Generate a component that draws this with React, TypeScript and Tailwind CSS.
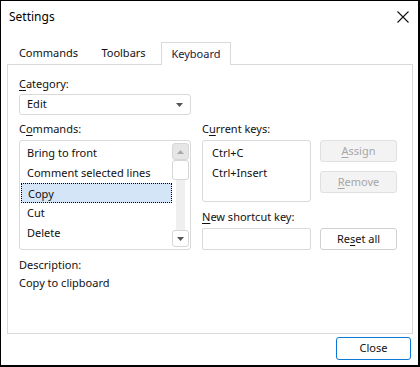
import React from "react";

const font = { fontFamily: '"Noto Sans", "Segoe UI", sans-serif' };

function U({ children }: { children: React.ReactNode }) {
  return <span className="underline underline-offset-2">{children}</span>;
}

export default function App() {
  const items = ["Bring to front", "Comment selected lines", "Copy", "Cut", "Delete", "Duplicate"];
  return (
    <div
      className="w-[420px] h-[367px] bg-white border-l border-t border-r-2 border-b-2 border-black flex flex-col text-[11px] text-[#111] overflow-hidden"
      style={font}
    >
      {/* title bar */}
      <div className="h-[31px] flex items-center justify-between pl-[8px] pr-[7px]">
        <span className="text-[12px] text-black">Settings</span>
        <svg width="14" height="14" viewBox="0 0 14 14" className="mr-[1px]">
          <path d="M1.5 1.5 L12.5 12.5 M12.5 1.5 L1.5 12.5" stroke="#111" strokeWidth="1.1" />
        </svg>
      </div>
      {/* tabs */}
      <div className="h-[10px]" />
      <div className="flex items-end h-[22px] pl-[10px] relative z-10">
        <div className="w-[75px] h-[22px] flex items-center justify-center text-[#111]">Commands</div>
        <div className="w-[75px] h-[22px] flex items-center justify-center text-[#111]">Toolbars</div>
        <div className="w-[70px] h-[23px] mb-[-1px] flex items-center justify-center bg-white border border-b-0 border-[#d9d9d9] text-[#1a1a3a]">
          Keyboard
        </div>
      </div>
      {/* panel */}
      <div className="ml-[6px] w-[406px] h-[270px] border border-[#d9d9d9] px-[11px] pt-[10px]">
        <div className="flex gap-[11px]">
          {/* left column */}
          <div className="w-[172px] flex flex-col">
            <div className="h-[17px] leading-[17px]"><U>C</U>ategory:</div>
            <div className="mt-[2px] h-[21px] border border-[#d9d9d9] rounded-[3px] flex items-center justify-between pl-[7px] pr-[7px]">
              <span>Edit</span>
              <svg width="7" height="4" viewBox="0 0 7 4"><path d="M0 0 H7 L3.5 4 Z" fill="#555" /></svg>
            </div>
            <div className="mt-[5px] h-[17px] leading-[17px]">C<U>o</U>mmands:</div>
            <div className="mt-[3px] h-[110px] border border-[#d9d9d9] rounded-[3px] flex overflow-hidden">
              <div className="flex-1 pt-[2px] pl-[1px] overflow-hidden">
                {items.map((it) => (
                  <div
                    key={it}
                    className={
                      "h-[20px] leading-[19px] pl-[6px] " +
                      (it === "Copy" ? "bg-[#d3e5f6] border border-dotted border-black pl-[5px] leading-[18px]" : "")
                    }
                  >
                    {it}
                  </div>
                ))}
              </div>
              <div className="w-[17px] mr-[1px] flex flex-col items-center py-[2px]">
                <div className="w-[17px] h-[17px] bg-[#e6e6e6] border border-[#d6d6d6] rounded-[3px] flex items-center justify-center">
                  <svg width="7" height="4" viewBox="0 0 7 4"><path d="M0 4 H7 L3.5 0 Z" fill="#aaa" /></svg>
                </div>
                <div className="w-[17px] h-[20px] bg-white border border-[#d6d6d6] rounded-[3px]" />
                <div className="w-[9px] flex-1 bg-[#efefef]" />
                <div className="w-[17px] h-[17px] bg-white border border-[#d6d6d6] rounded-[3px] flex items-center justify-center">
                  <svg width="7" height="4" viewBox="0 0 7 4"><path d="M0 0 H7 L3.5 4 Z" fill="#555" /></svg>
                </div>
              </div>
            </div>
            <div className="mt-[6px] h-[17px] leading-[17px]">Description:</div>
            <div className="mt-[1px] h-[17px] leading-[17px]">Copy to clipboard</div>
          </div>
          {/* right column */}
          <div className="flex flex-col">
            <div className="h-[17px] leading-[17px] mt-[45px]">C<U>u</U>rrent keys:</div>
            <div className="flex gap-[9px] mt-[3px]">
              <div className="w-[109px] h-[62px] border border-[#d9d9d9] rounded-[3px] pt-[2px] pl-[9px]">
                <div className="h-[20px] leading-[19px]">Ctrl+C</div>
                <div className="h-[20px] leading-[19px]">Ctrl+Insert</div>
              </div>
              <div className="flex flex-col gap-[9px]">
                <div className="w-[77px] h-[22px] bg-[#f3f3f3] border border-[#e0e0e0] rounded-[3px] flex items-center justify-center text-[#a6a6a6]">
                  <span><U>A</U>ssign</span>
                </div>
                <div className="w-[77px] h-[22px] bg-[#f3f3f3] border border-[#e0e0e0] rounded-[3px] flex items-center justify-center text-[#a6a6a6]">
                  <span><U>R</U>emove</span>
                </div>
              </div>
            </div>
            <div className="mt-[6px] h-[17px] leading-[17px]"><U>N</U>ew shortcut key:</div>
            <div className="flex gap-[9px] mt-[3px]">
              <div className="w-[109px] h-[22px] border border-[#d9d9d9] rounded-[2px]" />
              <div className="w-[77px] h-[22px] bg-white border border-[#d0d0d0] rounded-[3px] flex items-center justify-center">
                <span>Re<U>s</U>et all</span>
              </div>
            </div>
          </div>
        </div>
      </div>
      {/* footer */}
      <div className="flex justify-end pr-[7px] mt-[3px]">
        <div className="w-[75px] h-[23px] border border-[#0a78d4] rounded-[3px] flex items-center justify-center">
          Close
        </div>
      </div>
    </div>
  );
}
